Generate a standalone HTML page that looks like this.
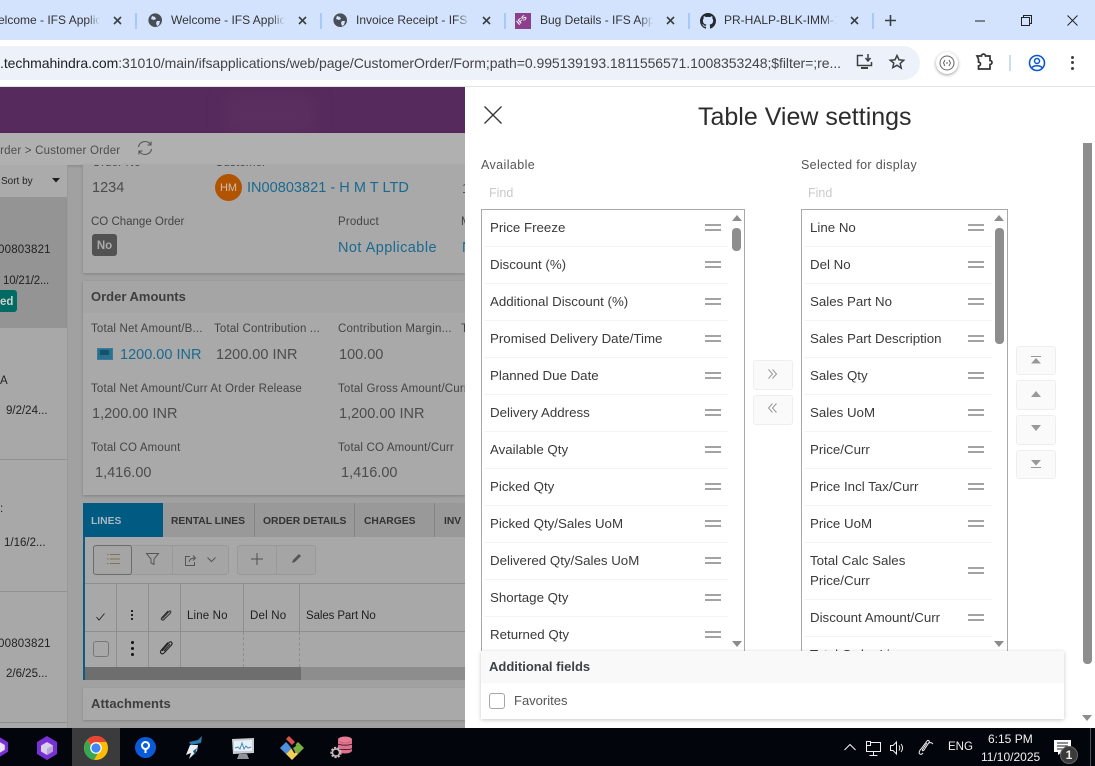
<!DOCTYPE html>
<html><head><meta charset="utf-8"><style>
html,body{margin:0;padding:0;width:1095px;height:766px;overflow:hidden;background:#fff}
body{position:relative;font-family:"Liberation Sans",sans-serif;color:#333}
.a{position:absolute}
.t{position:absolute;line-height:20px;white-space:nowrap;font-size:13px;margin-top:2px}
.n{margin-top:0}
.tab{font-size:12px;color:#333;overflow:hidden;-webkit-mask-image:linear-gradient(90deg,#000 88%,transparent);mask-image:linear-gradient(90deg,#000 88%,transparent)}
.lb{font-size:11.5px;color:#444;letter-spacing:.17px}
.v{font-size:14.5px;color:#4c4c4c}
.lnk{color:#1a6a8f}
.it{font-size:13.3px;color:#3a3a3a;margin-top:3px}
.tb{font-size:10.3px;font-weight:bold;color:#333;margin-top:4px}
.dr{position:absolute;width:16px;height:3px;border-top:2px solid #a3a3a3;border-bottom:2px solid #a3a3a3;}
.sep{position:absolute;height:1px;background:#f4f4f4}
.btn{position:absolute;width:38px;background:#fafafa;border:1px solid #eeeeee;border-radius:3px}
.sb{position:absolute;background:#8e8e8e;border-radius:4px}
svg{position:absolute;overflow:visible}
</style></head><body>

<!-- browser chrome -->
<div class="a" style="left:0;top:0;width:1095px;height:40px;background:#d3e3fd"></div>
<div class="t tab n" style="left:-2px;top:10px;width:102px">elcome - IFS Applic</div>
<div class="a" style="left:135px;top:13px;width:2px;height:16px;background:#a8c7fa"></div>
<div class="a" style="left:320px;top:13px;width:2px;height:16px;background:#a8c7fa"></div>
<div class="a" style="left:504px;top:13px;width:2px;height:16px;background:#a8c7fa"></div>
<div class="a" style="left:688px;top:13px;width:2px;height:16px;background:#a8c7fa"></div>
<div class="a" style="left:872px;top:13px;width:2px;height:16px;background:#a8c7fa"></div>
<svg style="left:148px;top:13px" width="15" height="15" viewBox="0 0 15 15"><circle cx="7.2" cy="7.2" r="6.8" fill="#4a4f57"/><path d="M4 3l3 1 1 2-2 1-3-1zM9 8l3 0-1 4-2 1-1-3z" fill="#d3e3fd"/></svg>
<div class="t tab n" style="left:171px;top:10px;width:114px">Welcome - IFS Applic</div>
<svg style="left:333px;top:13px" width="15" height="15" viewBox="0 0 15 15"><circle cx="7.2" cy="7.2" r="6.8" fill="#4a4f57"/><path d="M4 3l3 1 1 2-2 1-3-1zM9 8l3 0-1 4-2 1-1-3z" fill="#d3e3fd"/></svg>
<div class="t tab n" style="left:356px;top:10px;width:114px">Invoice Receipt - IFS Applic</div>
<div class="a" style="left:515px;top:13px;width:16px;height:16px;background:#8c3f8d;overflow:hidden"></div>
<div class="t n" style="left:517px;top:11px;font-size:7px;color:#fff;font-weight:bold;transform:rotate(-40deg)">IFS</div>
<div class="t tab n" style="left:540px;top:10px;width:113px">Bug Details - IFS App</div>
<svg style="left:700px;top:13px" width="16" height="16" viewBox="0 0 16 16"><path fill="#24292f" d="M8 0C3.58 0 0 3.58 0 8c0 3.54 2.29 6.53 5.47 7.59.4.07.55-.17.55-.38 0-.19-.01-.82-.01-1.49-2.01.37-2.53-.49-2.69-.94-.09-.23-.48-.94-.82-1.13-.28-.15-.68-.52-.01-.53.63-.01 1.08.58 1.23.82.72 1.21 1.87.87 2.33.66.07-.52.28-.87.51-1.07-1.78-.2-3.64-.89-3.64-3.95 0-.87.31-1.59.82-2.15-.08-.2-.36-1.02.08-2.12 0 0 .67-.21 2.2.82.64-.18 1.32-.27 2-.27s1.36.09 2 .27c1.53-1.04 2.2-.82 2.2-.82.44 1.1.16 1.92.08 2.12.51.56.82 1.27.82 2.15 0 3.07-1.87 3.75-3.65 3.95.29.25.54.73.54 1.48 0 1.07-.01 1.93-.01 2.2 0 .21.15.46.55.38A8.01 8.01 0 0 0 16 8c0-4.42-3.58-8-8-8z"/></svg>
<div class="t tab n" style="left:724px;top:10px;width:113px">PR-HALP-BLK-IMM-1</div>
<svg style="left:113px;top:16px" width="9" height="9"><path d="M1 1l7 7M8 1l-7 7" stroke="#3c4043" stroke-width="1.6"/></svg>
<svg style="left:298px;top:16px" width="9" height="9"><path d="M1 1l7 7M8 1l-7 7" stroke="#3c4043" stroke-width="1.6"/></svg>
<svg style="left:482px;top:16px" width="9" height="9"><path d="M1 1l7 7M8 1l-7 7" stroke="#3c4043" stroke-width="1.6"/></svg>
<svg style="left:666px;top:16px" width="9" height="9"><path d="M1 1l7 7M8 1l-7 7" stroke="#3c4043" stroke-width="1.6"/></svg>
<svg style="left:850px;top:16px" width="9" height="9"><path d="M1 1l7 7M8 1l-7 7" stroke="#3c4043" stroke-width="1.6"/></svg>
<svg style="left:885px;top:15px" width="11" height="11"><path d="M5.5 0v11M0 5.500h11" stroke="#3c4043" stroke-width="1.6"/></svg>
<svg style="left:975px;top:15px" width="10" height="10"><path d="M0 6h10" stroke="#222" stroke-width="1"/></svg>
<svg style="left:1021px;top:15px" width="11" height="11"><path d="M.5 2.500h8v8h-8zM2.500 2.500v-2h8v8h-2" fill="none" stroke="#222" stroke-width="1"/></svg>
<svg style="left:1067px;top:15px" width="11" height="11"><path d="M.5.500l10 10M10.500.500l-10 10" stroke="#222" stroke-width="1"/></svg>

<div class="a" style="left:0;top:40px;width:1095px;height:46px;background:#fff;border-radius:8px 8px 0 0"></div>
<div class="a" style="left:0;top:86px;width:1095px;height:1px;background:#e3e3e3"></div>
<div class="a" style="left:-20px;top:46px;width:940px;height:34px;background:#edf2fa;border-radius:17px"></div>
<div class="t n" style="left:0;top:53px;width:846px;font-size:14px;color:#202124;letter-spacing:-.05px;overflow:hidden">.techmahindra.com<span style="color:#444">:31010/main/ifsapplications/web/page/CustomerOrder/Form;path=0.995139193.1811556571.1008353248;$filter=;re...</span></div>
<svg style="left:856px;top:54px" width="18" height="16" viewBox="0 0 18 16"><path d="M7 1.500H1.500v10h14V8" fill="none" stroke="#3c4043" stroke-width="1.500"/><path d="M5 14h7" stroke="#3c4043" stroke-width="2"/><path d="M12 0v6M9.500 4l2.500 3 2.500-3" fill="none" stroke="#3c4043" stroke-width="1.500"/></svg>
<svg style="left:889px;top:54px" width="16" height="16" viewBox="0 0 16 16"><path d="M8 1.500l2 4.300 4.700.5-3.500 3.200 1 4.600L8 11.300 3.800 13.600l1-4.600L1.300 6.300 6 5.800z" fill="none" stroke="#3c4043" stroke-width="1.500"/></svg>
<div class="a" style="left:936px;top:52px;width:22px;height:22px;border-radius:50%;background:#fff;box-shadow:0 1px 3px rgba(0,0,0,.4)"></div>
<svg style="left:939px;top:55px" width="16" height="16" viewBox="0 0 16 16"><circle cx="8" cy="8" r="7" fill="none" stroke="#666" stroke-width="1"/><path d="M6 5L4.500 8 6 11M10 5l1.500 3L10 11M7 8h2" fill="none" stroke="#666"/></svg>
<svg style="left:975px;top:53px" width="18" height="18" viewBox="0 0 18 18"><path d="M2 3h4.500a2 2 0 0 1 4 0H15v4.500a2 2 0 0 1 0 4V16H3.500v-3a2 2 0 0 0 0-4V6z" fill="none" stroke="#333" stroke-width="1.700"/></svg>
<div class="a" style="left:1009px;top:55px;width:2px;height:16px;background:#cddcf0"></div>
<svg style="left:1028px;top:54px" width="18" height="18" viewBox="0 0 18 18"><circle cx="9" cy="9" r="7.500" fill="none" stroke="#0b57d0" stroke-width="1.600"/><circle cx="9" cy="7" r="2.500" fill="none" stroke="#0b57d0" stroke-width="1.500"/><path d="M3.800 14c1.500-3 8.900-3 10.400 0" fill="none" stroke="#0b57d0" stroke-width="1.500"/></svg>
<div class="a" style="left:1071px;top:56px;width:3px;height:3px;border-radius:50%;background:#3c4043"></div>
<div class="a" style="left:1071px;top:61px;width:3px;height:3px;border-radius:50%;background:#3c4043"></div>
<div class="a" style="left:1071px;top:67px;width:3px;height:3px;border-radius:50%;background:#3c4043"></div>

<!-- dimmed app -->
<div class="a" style="left:0;top:87px;width:465px;height:641px;background:#a1a1a1"></div>
<div class="a" style="left:0;top:87px;width:465px;height:46px;background:#562a5c;overflow:hidden"><div class="a" style="left:225px;top:8px;width:90px;height:38px;background:#5b2f60;filter:blur(8px)"></div></div>
<div class="a" style="left:0;top:133px;width:465px;height:32px;background:#b0b0b0;box-shadow:0 1px 3px rgba(0,0,0,.18)"></div>
<div class="t" style="left:-9px;top:139px;font-size:11.5px;color:#4e4e4e;letter-spacing:.2px">Order &gt; Customer Order</div>
<svg style="left:137px;top:140px" width="16" height="16" viewBox="0 0 16 16"><path d="M1.500 7C2 3.500 5 1.500 8 1.500c2.500 0 4.500 1.500 5.500 3M14.500 9c-.5 3.500-3.500 5.500-6.500 5.500-2.500 0-4.500-1.500-5.500-3" fill="none" stroke="#555" stroke-width="1.100"/><path d="M14 1.500v3.500h-3.500M2 14.500V11h3.500" fill="none" stroke="#555" stroke-width="1.100"/></svg>

<!-- sidebar -->
<div class="a" style="left:0;top:165px;width:67px;height:563px;background:#a8a8a8"></div>
<div class="a" style="left:67px;top:165px;width:1px;height:563px;background:#999"></div>
<div class="a" style="left:0;top:165px;width:67px;height:32px;background:#ababab"></div>
<div class="t" style="left:1px;top:170px;font-size:10px;color:#222">Sort by</div>
<svg style="left:52px;top:178px" width="8" height="5"><path d="M0 0h8L4 4.500z" fill="#1e1e1e"/></svg>
<div class="a" style="left:0;top:197px;width:67px;height:131px;background:#949494"></div>
<div class="t" style="left:-2px;top:238px;font-size:11.5px;color:#222;letter-spacing:.2px">00803821</div>
<div class="t" style="left:3px;top:269px;font-size:11.5px;color:#222;letter-spacing:-.2px">10/21/2...</div>
<div class="a" style="left:-10px;top:290px;width:27px;height:22px;background:#006b63;border-radius:3px"></div>
<div class="t" style="left:0;top:290px;font-size:11.5px;color:#cfcfcf;font-weight:bold">ed</div>
<div class="t" style="left:0;top:369px;font-size:11.5px;color:#222">A</div>
<div class="t" style="left:6px;top:399px;font-size:11.5px;color:#222">9/2/24...</div>
<div class="a" style="left:0;top:459px;width:67px;height:1px;background:#909090"></div>
<div class="t" style="left:0;top:497px;font-size:11.5px;color:#222">:</div>
<div class="t" style="left:4px;top:531px;font-size:11.5px;color:#222">1/16/2...</div>
<div class="a" style="left:0;top:591px;width:67px;height:1px;background:#909090"></div>
<div class="t" style="left:-2px;top:632px;font-size:11.5px;color:#222;letter-spacing:.2px">00803821</div>
<div class="t" style="left:6px;top:662px;font-size:11.5px;color:#222">2/6/25...</div>
<div class="a" style="left:0;top:722px;width:67px;height:1px;background:#909090"></div>

<!-- card 1 -->
<div class="a" style="left:83px;top:165px;width:382px;height:108px;background:#a9a9a9;box-shadow:0 1px 3px rgba(0,0,0,.2)"></div>
<div class="a" style="left:92px;top:165px;width:56px;height:3px;overflow:hidden"><div class="t lb" style="left:0;top:-14px">Order No</div></div>
<div class="a" style="left:215px;top:165px;width:56px;height:3px;overflow:hidden"><div class="t lb" style="left:0;top:-14px">Customer</div></div>
<div class="t v" style="left:92px;top:176px">1234</div>
<div class="a" style="left:215px;top:174px;width:27px;height:27px;border-radius:50%;background:#b25300"></div>
<div class="t" style="left:215px;top:176px;width:27px;text-align:center;font-size:11px;color:#c9c0b8">HM</div>
<div class="t v lnk" style="left:247px;top:176px;letter-spacing:.03px">IN00803821 - H M T LTD</div>
<div class="t" style="left:462px;top:176px;font-size:14px;color:#4c4c4c">1</div>
<div class="t lb" style="left:91px;top:210px;letter-spacing:0">CO Change Order</div>
<div class="t lb" style="left:338px;top:210px">Product</div>
<div class="t lb" style="left:461px;top:210px">M</div>
<div class="a" style="left:92px;top:234px;width:25px;height:22px;background:#525252;border-radius:3px"></div>
<div class="t" style="left:92px;top:234px;width:25px;text-align:center;font-size:11.5px;font-weight:bold;color:#ababab">No</div>
<div class="t v lnk" style="left:338px;top:236px;letter-spacing:.45px">Not Applicable</div>
<div class="t v lnk" style="left:462px;top:236px">N</div>

<!-- card 2 -->
<div class="a" style="left:83px;top:281px;width:382px;height:214px;background:#a9a9a9;box-shadow:0 1px 3px rgba(0,0,0,.2)"></div>
<div class="a" style="left:83px;top:281px;width:382px;height:32px;background:#a5a5a5"></div>
<div class="t" style="left:91px;top:285px;font-size:13px;font-weight:bold;color:#3e3e3e">Order Amounts</div>
<div class="t lb" style="left:91px;top:317px">Total Net Amount/B...</div>
<div class="t lb" style="left:214px;top:317px">Total Contribution ...</div>
<div class="t lb" style="left:338px;top:317px">Contribution Margin...</div>
<div class="t lb" style="left:461px;top:317px">T</div>
<div class="a" style="left:97px;top:348px;width:14px;height:10px;background:#2a708f;border:1px solid #3d7a95"></div>
<div class="a" style="left:100px;top:350px;width:9px;height:5px;background:#16506b"></div>
<div class="t v lnk" style="left:120px;top:343px">1200.00 INR</div>
<div class="t v" style="left:216px;top:343px">1200.00 INR</div>
<div class="t v" style="left:339px;top:343px">100.00</div>
<div class="t lb" style="left:91px;top:377px">Total Net Amount/Curr At Order Release</div>
<div class="t lb" style="left:338px;top:377px;width:127px;overflow:hidden">Total Gross Amount/Curr</div>
<div class="t v" style="left:92px;top:402px">1,200.00 INR</div>
<div class="t v" style="left:339px;top:402px">1,200.00 INR</div>
<div class="t lb" style="left:91px;top:436px">Total CO Amount</div>
<div class="t lb" style="left:338px;top:436px">Total CO Amount/Curr</div>
<div class="t v" style="left:95px;top:461px">1,416.00</div>
<div class="t v" style="left:341px;top:461px">1,416.00</div>

<!-- tabs -->
<div class="a" style="left:83px;top:503px;width:382px;height:34px;background:#999"></div>
<div class="a" style="left:83px;top:503px;width:80px;height:34px;background:#005a82"></div>
<div class="t tb" style="left:91px;top:508px;color:#a6b8c2">LINES</div>
<div class="t tb" style="left:171px;top:508px">RENTAL LINES</div>
<div class="t tb" style="left:263px;top:508px">ORDER DETAILS</div>
<div class="t tb" style="left:364px;top:508px">CHARGES</div>
<div class="t tb" style="left:444px;top:508px">INV</div>
<div class="a" style="left:254px;top:503px;width:1px;height:34px;background:#858585"></div>
<div class="a" style="left:354px;top:503px;width:1px;height:34px;background:#858585"></div>
<div class="a" style="left:434px;top:503px;width:1px;height:34px;background:#858585"></div>

<!-- lines panel -->
<div class="a" style="left:83px;top:537px;width:382px;height:143px;background:#a8a8a8;border-left:2px solid #0a5d82;box-sizing:border-box"></div>
<div class="a" style="left:93px;top:545px;width:134px;height:28px;border:1px solid #999;border-radius:3px;background:#a5a5a5"></div>
<div class="a" style="left:93px;top:545px;width:37px;height:28px;border:1px solid #6c6c6c;border-radius:3px;background:#a5a5a5"></div>
<div class="a" style="left:172px;top:546px;width:1px;height:28px;background:#999"></div>
<div class="a" style="left:237px;top:545px;width:77px;height:28px;border:1px solid #999;border-radius:3px;background:#a5a5a5"></div>
<div class="a" style="left:276px;top:546px;width:1px;height:28px;background:#999"></div>
<svg style="left:107px;top:553px" width="13" height="12"><path d="M3 1.500h10M3 6h10M3 10.500h10M0 1.500h1.500M0 6h1.500M0 10.500h1.500" stroke="#7d7552" stroke-width="1"/></svg>
<svg style="left:146px;top:553px" width="13" height="12"><path d="M.5.500h12L8 6v5.500L5 10V6z" fill="none" stroke="#555" stroke-width="1"/></svg>
<svg style="left:185px;top:555px" width="11" height="11"><path d="M5 1.500H.5v9h9V7M4 7c.500-3 2.500-4 6-4M8 .500l2.500 2.500L8 5.500" fill="none" stroke="#555"/></svg>
<svg style="left:207px;top:557px" width="9" height="6"><path d="M.5.500L4.500 4.500 8.500.500" fill="none" stroke="#555"/></svg>
<svg style="left:251px;top:553px" width="12" height="12"><path d="M6 0v12M0 6h12" stroke="#4e4e4e" stroke-width="1"/></svg>
<svg style="left:291px;top:553px" width="11" height="11"><path d="M1 10l1-3L8 1l2 2-6 6z" fill="#555"/></svg>
<div class="a" style="left:85px;top:583px;width:380px;height:1px;background:#8e8e8e"></div>
<div class="a" style="left:85px;top:631px;width:380px;height:1px;background:#8e8e8e"></div>
<div class="a" style="left:116px;top:583px;width:1px;height:84px;background:#8e8e8e"></div>
<div class="a" style="left:148px;top:583px;width:1px;height:84px;background:#8e8e8e"></div>
<div class="a" style="left:180px;top:583px;width:1px;height:84px;background:#8e8e8e"></div>
<div class="a" style="left:243px;top:583px;width:1px;height:48px;background:#8e8e8e"></div>
<div class="a" style="left:299px;top:583px;width:1px;height:48px;background:#8e8e8e"></div>
<div class="a" style="left:243px;top:632px;height:35px;border-left:1px dashed #8e8e8e"></div>
<div class="a" style="left:299px;top:632px;height:35px;border-left:1px dashed #8e8e8e"></div>
<svg style="left:96px;top:613px" width="9" height="8"><path d="M.5 4l2.500 3L8.500.5" fill="none" stroke="#222" stroke-width=".9"/></svg>
<div class="a" style="left:131px;top:610px;width:2px;height:2px;background:#222"></div>
<div class="a" style="left:131px;top:614px;width:2px;height:2px;background:#222"></div>
<div class="a" style="left:131px;top:618px;width:2px;height:2px;background:#222"></div>
<svg style="left:160px;top:609px" width="12" height="12" viewBox="0 0 12 12"><path d="M2.500 9.500L9 2.500c1.500-1.500 2.500.5 1 2L4 10.500C2 12 .5 10 2 8.500L8 2" fill="none" stroke="#333" stroke-width="1.100"/></svg>
<div class="t" style="left:187px;top:604px;font-size:11.5px;color:#1f1f1f;letter-spacing:.15px">Line No</div>
<div class="t" style="left:250px;top:604px;font-size:11.5px;color:#1f1f1f;letter-spacing:.2px">Del No</div>
<div class="t" style="left:306px;top:604px;font-size:11.5px;color:#1f1f1f;letter-spacing:-.1px">Sales Part No</div>
<div class="a" style="left:93px;top:641px;width:14px;height:14px;border:1px solid #777;border-radius:3px"></div>
<div class="a" style="left:131px;top:641px;width:3px;height:3px;border-radius:50%;background:#111"></div>
<div class="a" style="left:131px;top:647px;width:3px;height:3px;border-radius:50%;background:#111"></div>
<div class="a" style="left:131px;top:653px;width:3px;height:3px;border-radius:50%;background:#111"></div>
<svg style="left:158px;top:640px" width="16" height="16" viewBox="0 0 16 16"><path d="M4 11L11 2.500c2-2 4 .5 2.500 2.500L6 13c-2 2-4.500 0-3-2.500L10 2.500M6 11l6-7" fill="none" stroke="#222" stroke-width="1.100"/></svg>
<div class="a" style="left:85px;top:667px;width:380px;height:13px;background:#8d8d8d"></div>
<div class="a" style="left:85px;top:667px;width:216px;height:13px;background:#6e6e6e"></div>
<div class="a" style="left:83px;top:688px;width:382px;height:32px;background:#a9a9a9;box-shadow:0 1px 2px rgba(0,0,0,.18)"></div>
<div class="t" style="left:91px;top:692px;font-size:13px;font-weight:bold;color:#3e3e3e;letter-spacing:.1px">Attachments</div>

<!-- white panel -->
<div class="a" style="left:465px;top:87px;width:630px;height:641px;background:#fff"></div>
<svg style="left:484px;top:106px" width="18" height="18"><path d="M.5.500l17 17M17.500.500l-17 17" stroke="#333" stroke-width="1.300"/></svg>
<div class="t" style="left:698px;top:102px;line-height:26px;font-size:25px;color:#2c2c2c">Table View settings</div>
<div class="t lb" style="left:481px;top:153px;font-size:12.5px;color:#555;letter-spacing:.4px">Available</div>
<div class="t lb" style="left:801px;top:153px;font-size:12.5px;color:#555;letter-spacing:.35px">Selected for display</div>
<div class="t" style="left:489px;top:181px;font-size:12.5px;color:#c9c9c9">Find</div>
<div class="t" style="left:808px;top:181px;font-size:12.5px;color:#c9c9c9">Find</div>

<!-- list boxes -->
<div class="a" style="left:481px;top:209px;width:262px;height:445px;border:1px solid #a8a8a8"></div>
<div class="a" style="left:801px;top:209px;width:205px;height:445px;border:1px solid #a8a8a8"></div>
<svg style="left:732px;top:215px" width="10" height="6"><path d="M0 6L5 0l5 6z" fill="#8c8c8c"/></svg>
<svg style="left:732px;top:641px" width="10" height="6"><path d="M0 0l5 6 5-6z" fill="#8c8c8c"/></svg>
<svg style="left:994px;top:215px" width="10" height="6"><path d="M0 6L5 0l5 6z" fill="#8c8c8c"/></svg>
<svg style="left:994px;top:641px" width="10" height="6"><path d="M0 0l5 6 5-6z" fill="#8c8c8c"/></svg>
<div class="sb" style="left:732px;top:228px;width:9px;height:23px"></div>
<div class="sb" style="left:995px;top:228px;width:9px;height:116px"></div>

<div class="t it" style="left:490px;top:215px">Price Freeze</div><div class="dr" style="left:705px;top:224px"></div><div class="sep" style="left:484px;top:246px;width:244px"></div>
<div class="t it" style="left:490px;top:252px">Discount (%)</div><div class="dr" style="left:705px;top:261px"></div><div class="sep" style="left:484px;top:283px;width:244px"></div>
<div class="t it" style="left:490px;top:289px">Additional Discount (%)</div><div class="dr" style="left:705px;top:298px"></div><div class="sep" style="left:484px;top:320px;width:244px"></div>
<div class="t it" style="left:490px;top:326px">Promised Delivery Date/Time</div><div class="dr" style="left:705px;top:335px"></div><div class="sep" style="left:484px;top:357px;width:244px"></div>
<div class="t it" style="left:490px;top:363px">Planned Due Date</div><div class="dr" style="left:705px;top:372px"></div><div class="sep" style="left:484px;top:394px;width:244px"></div>
<div class="t it" style="left:490px;top:400px">Delivery Address</div><div class="dr" style="left:705px;top:409px"></div><div class="sep" style="left:484px;top:431px;width:244px"></div>
<div class="t it" style="left:490px;top:437px">Available Qty</div><div class="dr" style="left:705px;top:446px"></div><div class="sep" style="left:484px;top:468px;width:244px"></div>
<div class="t it" style="left:490px;top:474px">Picked Qty</div><div class="dr" style="left:705px;top:483px"></div><div class="sep" style="left:484px;top:505px;width:244px"></div>
<div class="t it" style="left:490px;top:511px">Picked Qty/Sales UoM</div><div class="dr" style="left:705px;top:520px"></div><div class="sep" style="left:484px;top:542px;width:244px"></div>
<div class="t it" style="left:490px;top:548px">Delivered Qty/Sales UoM</div><div class="dr" style="left:705px;top:557px"></div><div class="sep" style="left:484px;top:579px;width:244px"></div>
<div class="t it" style="left:490px;top:585px">Shortage Qty</div><div class="dr" style="left:705px;top:594px"></div><div class="sep" style="left:484px;top:616px;width:244px"></div>
<div class="t it" style="left:490px;top:622px">Returned Qty</div><div class="dr" style="left:705px;top:631px"></div>

<div class="t it" style="left:810px;top:215px">Line No</div><div class="dr" style="left:968px;top:224px"></div><div class="sep" style="left:804px;top:246px;width:188px"></div>
<div class="t it" style="left:810px;top:252px">Del No</div><div class="dr" style="left:968px;top:261px"></div><div class="sep" style="left:804px;top:283px;width:188px"></div>
<div class="t it" style="left:810px;top:289px">Sales Part No</div><div class="dr" style="left:968px;top:298px"></div><div class="sep" style="left:804px;top:320px;width:188px"></div>
<div class="t it" style="left:810px;top:326px">Sales Part Description</div><div class="dr" style="left:968px;top:335px"></div><div class="sep" style="left:804px;top:357px;width:188px"></div>
<div class="t it" style="left:810px;top:363px">Sales Qty</div><div class="dr" style="left:968px;top:372px"></div><div class="sep" style="left:804px;top:394px;width:188px"></div>
<div class="t it" style="left:810px;top:400px">Sales UoM</div><div class="dr" style="left:968px;top:409px"></div><div class="sep" style="left:804px;top:431px;width:188px"></div>
<div class="t it" style="left:810px;top:437px">Price/Curr</div><div class="dr" style="left:968px;top:446px"></div><div class="sep" style="left:804px;top:468px;width:188px"></div>
<div class="t it" style="left:810px;top:474px">Price Incl Tax/Curr</div><div class="dr" style="left:968px;top:483px"></div><div class="sep" style="left:804px;top:505px;width:188px"></div>
<div class="t it" style="left:810px;top:511px">Price UoM</div><div class="dr" style="left:968px;top:520px"></div><div class="sep" style="left:804px;top:542px;width:188px"></div>
<div class="t it" style="left:810px;top:548px">Total Calc Sales</div><div class="t it" style="left:810px;top:568px">Price/Curr</div><div class="dr" style="left:968px;top:567px"></div><div class="sep" style="left:804px;top:599px;width:188px"></div>
<div class="t it" style="left:810px;top:605px">Discount Amount/Curr</div><div class="dr" style="left:968px;top:614px"></div><div class="sep" style="left:804px;top:636px;width:188px"></div>
<div class="t it" style="left:810px;top:642px">Total Order Line</div>

<!-- transfer buttons -->
<div class="btn" style="left:753px;top:360px;height:28px"></div>
<div class="btn" style="left:753px;top:395px;height:28px"></div>
<svg style="left:768px;top:369px" width="10" height="10"><path d="M.5.500L4.500 5 .5 9.500M4.500.500L8.500 5l-4 4.500" fill="none" stroke="#999"/></svg>
<svg style="left:768px;top:403px" width="10" height="10"><path d="M4.500.500L.5 5l4 4.500M8.500.500L4.500 5l4 4.500" fill="none" stroke="#999"/></svg>
<div class="btn" style="left:1016px;top:346px;height:27px"></div>
<div class="btn" style="left:1016px;top:380px;height:28px"></div>
<div class="btn" style="left:1016px;top:415px;height:28px"></div>
<div class="btn" style="left:1016px;top:450px;height:27px"></div>
<svg style="left:1031px;top:356px" width="10" height="8"><path d="M0 .5h10" stroke="#999"/><path d="M0 7.500l5-5.500 5 5.500z" fill="#999"/></svg>
<svg style="left:1031px;top:391px" width="10" height="6"><path d="M0 6l5-6 5 6z" fill="#999"/></svg>
<svg style="left:1031px;top:425px" width="10" height="6"><path d="M0 0l5 6 5-6z" fill="#999"/></svg>
<svg style="left:1031px;top:460px" width="10" height="8"><path d="M0 0l5 5.500L10 0z" fill="#999"/><path d="M0 7.500h10" stroke="#999"/></svg>

<!-- additional fields -->
<div class="a" style="left:481px;top:651px;width:583px;height:68px;background:#fff;box-shadow:0 1px 4px rgba(0,0,0,.22)"></div>
<div class="a" style="left:481px;top:651px;width:583px;height:32px;background:#f9f9f9"></div>
<div class="t" style="left:489px;top:655px;font-size:13px;font-weight:bold;color:#3d4246">Additional fields</div>
<div class="a" style="left:489px;top:693px;width:14px;height:14px;border:1px solid #a5a5a5;border-radius:3px"></div>
<div class="t" style="left:514px;top:689px;font-size:13px;color:#555">Favorites</div>

<!-- panel scrollbar -->
<div class="a" style="left:1083px;top:143px;width:9px;height:521px;background:#8e8e8e;border-radius:0 0 4px 4px"></div>
<svg style="left:1082px;top:715px" width="10" height="6"><path d="M0 0l5 6 5-6z" fill="#8c8c8c"/></svg>

<!-- taskbar -->
<div class="a" style="left:0;top:728px;width:1095px;height:38px;background:#03050d"></div>
<div class="a" style="left:72px;top:728px;width:48px;height:38px;background:#3b3b3d"></div>
<svg style="left:-8px;top:736px" width="16" height="22" viewBox="0 0 20 24"><path d="M10 0l10 6v12l-10 6L0 18V6z" fill="#7a2fd8"/><path d="M10 6l6 3.500v6L10 19l-6-3.500v-6z" fill="#e9e3f5"/></svg>
<svg style="left:37px;top:736px" width="20" height="24" viewBox="0 0 20 24"><path d="M10 0l10 6v12l-10 6L0 18V6z" fill="#7a2fd8"/><path d="M10 6l6 3.500v6L10 19l-6-3.500v-6z" fill="#d9cfe8"/><path d="M10 12.500l6-3v6L10 19z" fill="#b9a7d3"/></svg>
<svg style="left:84px;top:736px" width="24" height="24" viewBox="0 0 24 24"><circle cx="12" cy="12" r="12" fill="#fbbc04"/><path d="M12 0a12 12 0 0 1 10.400 6H12a6 6 0 0 0-5.200 3L3.400 4A12 12 0 0 1 12 0z" fill="#ea4335"/><path d="M3.400 4L8.700 13a6 6 0 0 0 4.800 4.900L10 24A12 12 0 0 1 3.400 4z" fill="#34a853"/><circle cx="12" cy="12" r="5.800" fill="#fff"/><circle cx="12" cy="12" r="4.600" fill="#4285f4"/></svg>
<svg style="left:135px;top:737px" width="21" height="21" viewBox="0 0 21 21"><circle cx="10.500" cy="10.500" r="10.500" fill="#0a5bdc"/><circle cx="10.500" cy="8.500" r="3.500" fill="none" stroke="#fff" stroke-width="2"/><path d="M10.500 12v4" stroke="#fff" stroke-width="2"/></svg>
<svg style="left:185px;top:736px" width="18" height="24" viewBox="0 0 18 24"><path d="M4 6l9-2 4-4-1 7-10 2z" fill="#2a7bb0"/><path d="M5 9h8l-1 6-8 8 2-6-5 2z" fill="#e8eef2"/><path d="M8 15l4-3-2 7z" fill="#1b5c85"/></svg>
<svg style="left:231px;top:737px" width="24" height="24" viewBox="0 0 24 24"><path d="M1 2l22-1v15L2 17z" fill="#c9ced3"/><path d="M3 4l18-1v11H3z" fill="#e7f0f6"/><path d="M4 11l3-1 2 2 2-6 2 6 2-3 2 2 3-1" fill="none" stroke="#4a8cb8" stroke-width="1"/><path d="M8 17h8l2 5H6z" fill="#8f9397"/></svg>
<svg style="left:280px;top:736px" width="24" height="24" viewBox="0 0 24 24"><path d="M0 12l6-6 6 6-6 6z" fill="#4f8fe0"/><path d="M12 12l6-6 6 6-6 6z" fill="#78b13f"/><path d="M6 18l6-6 6 6-6 6z" fill="#f2cf58"/><path d="M6 3l3-3 6 6-3 3z" fill="#d9534f"/><path d="M9 8l3 4 3 5M12 12l4-3" stroke="#111" stroke-width="1.500" fill="none"/></svg>
<svg style="left:330px;top:736px" width="22" height="22" viewBox="0 0 22 22"><ellipse cx="15" cy="3.500" rx="7" ry="3" fill="#e97a94"/><path d="M8 3.500v11c0 1.500 3 3 7 3s7-1.500 7-3v-11c0 1.500-3 3-7 3s-7-1.500-7-3z" fill="#e0708c"/><path d="M8 8c1.500 1.500 12.500 1.500 14 0M8 12.500c1.500 1.500 12.500 1.500 14 0" fill="none" stroke="#03050d" stroke-width=".8"/><circle cx="6" cy="16.500" r="4.500" fill="none" stroke="#c9b8b8" stroke-width="2.400" stroke-dasharray="2 1.200"/><circle cx="6" cy="16.500" r="3.600" fill="none" stroke="#c9b8b8" stroke-width="1.600"/></svg>

<!-- tray -->
<svg style="left:844px;top:743px" width="12" height="8"><path d="M.5 7L6 1.500 11.500 7" fill="none" stroke="#eee" stroke-width="1.100"/></svg>
<svg style="left:866px;top:741px" width="16" height="15"><path d="M.5 1.500h14v9H.5zM7.500 10.500v3.500M3.500 14.500h8" fill="none" stroke="#eee"/><rect x=".5" y=".5" width="4" height="4" fill="#03050d" stroke="#eee"/></svg>
<svg style="left:890px;top:741px" width="15" height="14"><path d="M.5 4.500h2.500L6.500 1v12L3 9.500H.5zM9 4.500c1 1.500 1 3.500 0 5M11 3c2 2.500 2 5.500 0 8" fill="none" stroke="#eee"/></svg>
<svg style="left:918px;top:739px" width="16" height="18"><path d="M2 15c-2-1 0-4 1-5l6-8c1-1.500 3 0 2 1.500L6 11c-1 1.500-2 .5-1.500-.5L9 4M11 4c2-1 3 0 4 1M2 15c1 1 2 0 3-1" fill="none" stroke="#eee"/></svg>
<div class="t n" style="left:948px;top:737px;font-size:11.5px;color:#f0f0f0">ENG</div>
<div class="t n" style="left:988px;top:729px;font-size:12px;color:#f0f0f0">6:15 PM</div>
<div class="t n" style="left:981px;top:747px;font-size:12px;color:#f0f0f0">11/10/2025</div>
<svg style="left:1054px;top:740px" width="18" height="16"><path d="M0 0h17v12H8l-4 3v-3H0z" fill="#fff"/><path d="M3 3h11M3 6h11M3 9h8" stroke="#222"/></svg>
<div class="a" style="left:1060px;top:746px;width:18px;height:18px;border-radius:50%;background:#3a3a3a;border:1px solid #666;box-sizing:border-box"></div>
<div class="t n" style="left:1060px;top:745px;width:18px;text-align:center;font-size:12px;font-weight:bold;color:#eee">1</div>
<div class="a" style="left:1090px;top:728px;width:1px;height:38px;background:#555"></div>
</body></html>
